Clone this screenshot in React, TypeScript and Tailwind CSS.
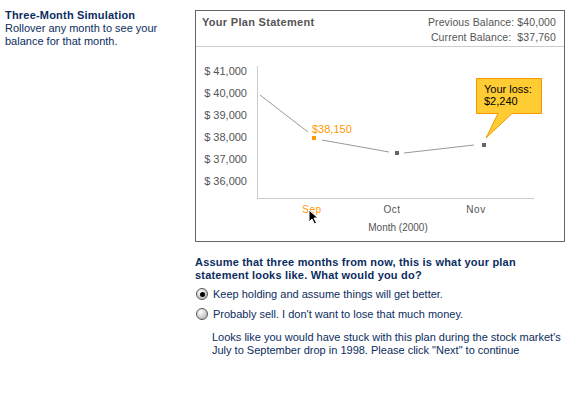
import React from 'react';

const navy = 'text-[#0b2d60]';

function Radio({ checked }: { checked?: boolean }) {
  return (
    <span className="flex h-[12px] w-[12px] shrink-0 items-center justify-center rounded-full border border-[#555] bg-[radial-gradient(circle_at_35%_30%,#ffffff,#a8a8a8)]">
      {checked && <span className="h-[5px] w-[5px] rounded-full bg-black" />}
    </span>
  );
}

function Chart() {
  const labels = ['$ 41,000', '$ 40,000', '$ 39,000', '$ 38,000', '$ 37,000', '$ 36,000'];
  return (
    <svg width="368" height="193" className="block" style={{ fontFamily: '"Liberation Sans", Arial, sans-serif' }}>
      {/* y labels */}
      {labels.map((l, i) => (
        <text key={l} x="51" y={28 + i * 22} textAnchor="end" fontSize="11" fill="#555">
          {l}
        </text>
      ))}

      {/* axes */}
      <line x1="61.5" y1="19" x2="61.5" y2="151.5" stroke="#ccc" />
      <line x1="61" y1="151.5" x2="338" y2="151.5" stroke="#ccc" />

      {/* data line */}
      <line x1="64" y1="48" x2="112" y2="85" stroke="#999" />
      <line x1="126" y1="93" x2="193" y2="105" stroke="#999" />
      <line x1="208" y1="106" x2="278" y2="98" stroke="#999" />

      {/* markers */}
      <rect x="116" y="89" width="4" height="4" fill="#f90" />
      <rect x="199" y="104" width="4" height="4" fill="#666" />
      <rect x="286" y="96" width="4" height="4" fill="#666" />

      <text x="116" y="86" fontSize="11" fill="#f90">$38,150</text>

      {/* x labels */}
      <text x="116" y="166" textAnchor="middle" fontSize="10" fill="#f90" letterSpacing="0.5">Sep</text>
      <text x="196" y="166" textAnchor="middle" fontSize="10" fill="#555" letterSpacing="0.5">Oct</text>
      <text x="280" y="166" textAnchor="middle" fontSize="10" fill="#555" letterSpacing="0.5">Nov</text>
      <text x="202" y="184" textAnchor="middle" fontSize="10" fill="#555">Month (2000)</text>

      {/* tooltip */}
      <path
        d="M280.5 31.5 H345.5 V66.5 H316 L290 91 L302 66.5 H280.5 Z"
        fill="#ffcc33"
        stroke="#f39800"
      />
      <text x="288" y="46" fontSize="11" fill="#000">Your loss:</text>
      <text x="288" y="58" fontSize="11" fill="#000">$2,240</text>

      {/* cursor */}
      <path
        d="M113 163 L113 175 L116 172 L118.5 177 L120.5 176 L118 171 L122 171 Z"
        fill="#000"
        stroke="#fff"
        strokeWidth="1"
      />
    </svg>
  );
}

export default function App() {
  return (
    <div className="h-[400px] w-[565px] bg-white font-['Liberation_Sans',Arial,sans-serif] text-[11px]">
      <div className="flex">
        {/* Left intro */}
        <div className={`w-[195px] shrink-0 pl-[5px] pt-[8px] ${navy}`}>
          <h1 className="text-[11px] font-bold leading-[14px] tracking-[0.2px]">Three-Month Simulation</h1>
          <p className="leading-[13px]">
            Rollover any month to see your
            <br />
            balance for that month.
          </p>
        </div>

        {/* Right side */}
        <div className="flex flex-col pt-[10px]">
          <div className="h-[232px] w-[370px] border border-[#666] bg-white">
            <div className="flex h-[36px] items-start justify-between border-b border-[#ccc] pl-[6px] pr-[8px] pt-[4px] text-[#555]">
              <div className="text-[11px] font-bold leading-[15px] tracking-[0.3px]">Your Plan Statement</div>
              <div className="whitespace-pre text-right text-[10.5px] leading-[15px] tracking-[0.1px]">
                <div>Previous Balance: $40,000</div>
                <div>Current Balance:  $37,760</div>
              </div>
            </div>
            <Chart />
          </div>

          <div className={`mt-[14px] ${navy}`}>
            <p className="font-bold leading-[13px] tracking-[0.2px]">
              Assume that three months from now, this is what your plan
              <br />
              statement looks like. What would you do?
            </p>

            <div className="mt-[5px] flex flex-col gap-[6px]">
              <label className="flex h-[14px] items-center gap-[5px] pl-[1px]">
                <Radio checked />
                <span>Keep holding and assume things will get better.</span>
              </label>
              <label className="flex h-[14px] items-center gap-[5px] pl-[1px]">
                <Radio />
                <span>Probably sell. I don't want to lose that much money.</span>
              </label>
            </div>

            <p className="mt-[10px] pl-[17px] leading-[13px]">
              Looks like you would have stuck with this plan during the stock market's
              <br />
              July to September drop in 1998. Please click "Next" to continue
            </p>
          </div>
        </div>
      </div>
    </div>
  );
}
